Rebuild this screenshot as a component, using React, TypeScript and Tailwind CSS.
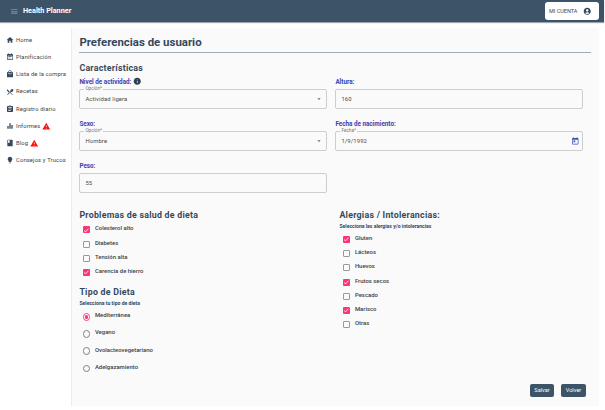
import type { ReactNode } from "react";
import {
  MdHome,
  MdEventNote,
  MdLocalMall,
  MdRestaurantMenu,
  MdAssignment,
  MdEqualizer,
  MdClass,
  MdLightbulb,
  MdWarning,
  MdAccountCircle,
  MdInfo,
  MdToday,
  MdArrowDropDown,
  MdMenu,
  MdCheck,
} from "react-icons/md";

const nav = [
  { label: "Home", Icon: MdHome },
  { label: "Planificación", Icon: MdEventNote },
  { label: "Lista de la compra", Icon: MdLocalMall },
  { label: "Recetas", Icon: MdRestaurantMenu },
  { label: "Registro diario", Icon: MdAssignment },
  { label: "Informes", Icon: MdEqualizer, warn: true },
  { label: "Blog", Icon: MdClass, warn: true },
  { label: "Consejos y Trucos", Icon: MdLightbulb },
];

const health = [
  { label: "Colesterol alto", on: true },
  { label: "Diabetes", on: false },
  { label: "Tensión alta", on: false },
  { label: "Carencia de hierro", on: true },
];

const allergies = [
  { label: "Gluten", on: true },
  { label: "Lácteos", on: false },
  { label: "Huevos", on: false },
  { label: "Frutos secos", on: true },
  { label: "Pescado", on: false },
  { label: "Marisco", on: true },
  { label: "Otras", on: false },
];

const diets = ["Mediterránea", "Vegano", "Ovolacteovegetariano", "Adelgazamiento"];

function Heading({ children }: { children: ReactNode }) {
  return (
    <h2 className="h-[12px] text-[8.8px] leading-[12px] font-bold tracking-[0.26px] text-[#34495e]">{children}</h2>
  );
}

function Field({
  label,
  value,
  legend,
  info,
  trailing,
}: {
  label: string;
  value: string;
  legend?: string;
  info?: boolean;
  trailing?: ReactNode;
}) {
  return (
    <div className="h-[42px]">
      <div className="flex h-[13px] items-center gap-[2px] text-[6.3px] leading-[13px] font-bold text-[#3a3fae]">
        {label}
        {info && <MdInfo className="mb-[3px] size-[8.5px] text-[#2c3e50]" />}
      </div>
      <div className="relative flex h-[20px] items-center justify-between rounded-[2px] border border-[#cecece] pr-[3px] pl-[5px] text-[5.9px] tracking-[0.11px] text-[#4a4a4a]">
        {legend && (
          <span className="absolute top-[-4px] left-[4px] bg-[#fafafa] px-[1px] text-[4.7px] leading-[6px] tracking-normal text-[#777777]">
            {legend}
          </span>
        )}
        <span>{value}</span>
        {trailing}
      </div>
    </div>
  );
}

function Check({ label, on }: { label: string; on: boolean }) {
  return (
    <li className="flex h-[14.3px] items-center pl-[3.5px]">
      <span
        className={
          on
            ? "flex size-[7px] items-center justify-center rounded-[1px] bg-[#ff3377]"
            : "size-[7px] rounded-[1px] border border-[#999999]"
        }
      >
        {on && <MdCheck className="size-[6.5px] text-white" />}
      </span>
      <span className="mb-[3px] ml-[5px] text-[5.95px] leading-[8px] font-medium text-[#3f3f3f]">{label}</span>
    </li>
  );
}

export default function App() {
  const caret = <MdArrowDropDown className="size-[8px] text-[#6a6a6a]" />;
  return (
    <div className="flex h-[410px] w-[605px] flex-col overflow-hidden bg-white font-['Roboto',sans-serif]">
      <header className="flex h-[22px] w-[604px] shrink-0 items-center bg-[#3d5368] pl-[10px] shadow-[0_1px_1px_#9aa5b0]">
        <MdMenu className="size-[8.5px] text-[#a9b4bf]" />
        <span className="ml-[4.5px] text-[7.25px] font-bold text-white">Health Planner</span>
        <button className="mr-[5px] ml-auto flex h-[18px] w-[54px] items-center justify-between rounded-[3px] bg-white pr-[8px] pl-[4px] text-[5.5px] text-[#34495e]">
          <span>MI CUENTA</span>
          <MdAccountCircle className="size-[8.5px]" />
        </button>
      </header>

      <div className="flex flex-1">
        <nav className="w-[71px] shrink-0 pt-[9.5px] pl-[6px]">
          {nav.map(({ label, Icon, warn }) => (
            <a key={label} className="flex h-[17.2px] items-center whitespace-nowrap">
              <Icon className="size-[8px] shrink-0 text-[#34495e]" />
              <span className="ml-[2px] text-[5.8px] tracking-[0.15px] text-[#444444]">{label}</span>
              {warn && <MdWarning className="ml-[2px] size-[8.5px] text-[#ff1010]" />}
            </a>
          ))}
        </nav>

        <main className="mt-[6px] h-[378px] w-[528px] border-l border-[#ededed] bg-[#fafafa] pl-[7.4px]">
          <h1 className="h-[25px] w-[512px] border-b border-[#9fabb7] pt-[6px] text-[11.45px] leading-[17px] font-bold text-[#34495e]">
            Preferencias de usuario
          </h1>

          <section className="pt-[9px]">
            <Heading>Características</Heading>
            <div className="mt-[2px] grid grid-cols-[248px_248px] gap-x-[8px]">
              <Field label="Nivel de actividad:" legend="Opción*" value="Actividad ligera" info trailing={caret} />
              <Field label="Altura:" value="160" />
              <Field label="Sexo:" legend="Opción*" value="Hombre" trailing={caret} />
              <Field
                label="Fecha de nacimiento:"
                legend="Fecha*"
                value="1/9/1992"
                trailing={<MdToday className="size-[8.5px] text-[#3f51b5]" />}
              />
              <Field label="Peso:" value="55" />
            </div>
          </section>

          <div className="mt-[7px] grid grid-cols-[260px_244px]">
            <section>
              <Heading>Problemas de salud de dieta</Heading>
              <ul className="mt-[1.7px]">
                {health.map((h) => (
                  <Check key={h.label} label={h.label} on={h.on} />
                ))}
              </ul>
              <div className="mt-[6.3px]">
                <Heading>Tipo de Dieta</Heading>
              </div>
              <p className="mt-[1px] text-[5.1px] leading-[8px] font-bold text-[#34495e]">Selecciona tu tipo de dieta</p>
              <ul className="mt-[1px]">
                {diets.map((diet, i) => (
                  <li key={diet} className="flex h-[17.2px] items-center pl-[3.5px]">
                    <span
                      className={
                        i === 0
                          ? "flex size-[7.5px] items-center justify-center rounded-full border border-[#ff4081]"
                          : "size-[7.5px] rounded-full border border-[#808080]"
                      }
                    >
                      {i === 0 && <span className="size-[3.5px] rounded-full bg-[#ff3377]" />}
                    </span>
                    <span className="mb-[3px] ml-[4.5px] text-[5.95px] leading-[8px] font-medium text-[#3f3f3f]">
                      {diet}
                    </span>
                  </li>
                ))}
              </ul>
            </section>

            <section>
              <Heading>Alergias / Intolerancias:</Heading>
              <p className="mt-[1px] text-[5.1px] leading-[8px] font-bold text-[#34495e]">
                Selecciona las alergias y/o intolerancias
              </p>
              <ul className="mt-[2px]">
                {allergies.map((a) => (
                  <Check key={a.label} label={a.label} on={a.on} />
                ))}
              </ul>
            </section>
          </div>

          <div className="mt-[7px] flex justify-end gap-[7px] pr-[13px]">
            <button className="h-[13px] w-[24px] rounded-[2px] bg-[#3d5368] text-[5.6px] text-white">Salvar</button>
            <button className="h-[13px] w-[25px] rounded-[2px] bg-[#3d5368] text-[5.6px] text-white">Volver</button>
          </div>
        </main>
      </div>
    </div>
  );
}
